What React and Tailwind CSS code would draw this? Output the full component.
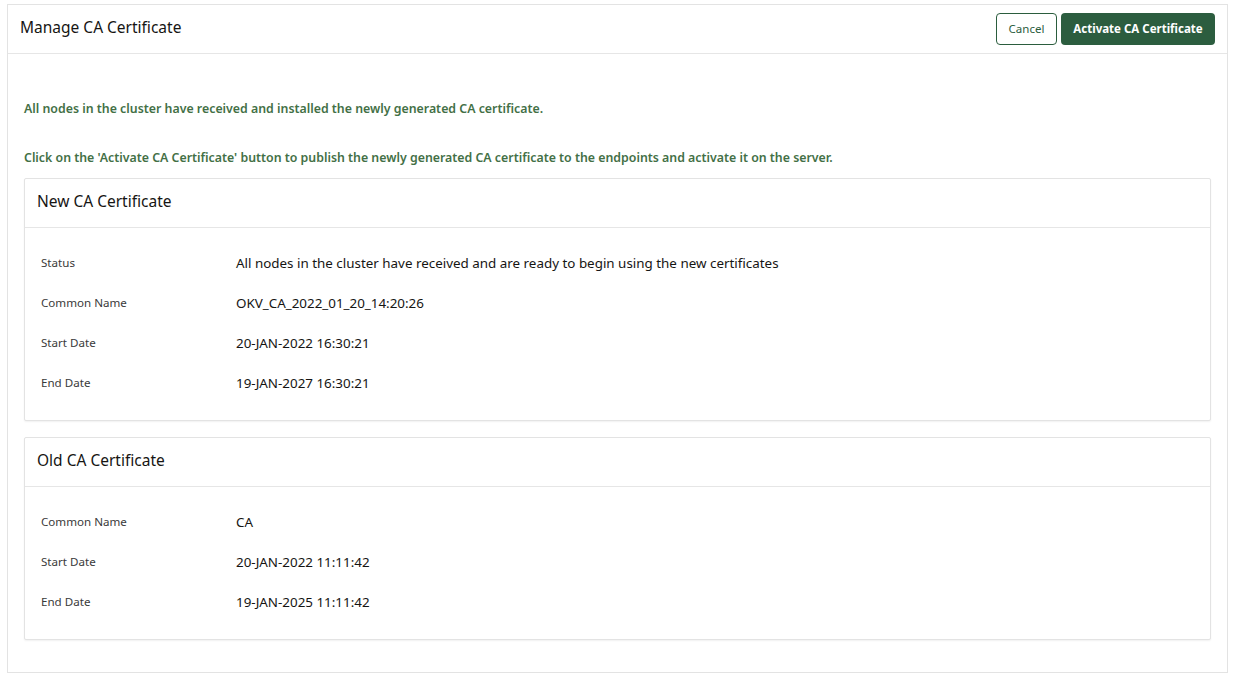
import React from "react";

const font = { fontFamily: '"Noto Sans", "Open Sans", sans-serif' };

function Row({ label, value }) {
  return (
    <div className="flex items-center h-[40px]">
      <div className="w-[195px] text-[11.6px] text-[#3a3a3a]">{label}</div>
      <div className="text-[13.4px] text-[#161513]">{value}</div>
    </div>
  );
}

function Card({ title, rows }) {
  return (
    <div className="border border-[#e3e3e3] rounded-[2px] shadow-[0_1px_2px_rgba(0,0,0,0.06)] bg-white">
      <div className="h-[49px] flex items-center px-[12px] border-b border-[#e6e6e6]">
        <span className="text-[15.5px] text-[#161513] leading-[20px] -mt-[5px]">{title}</span>
      </div>
      <div className="pt-[15px] pb-[17px] px-[16px]">
        {rows.map((r) => (
          <Row key={r[0]} label={r[0]} value={r[1]} />
        ))}
      </div>
    </div>
  );
}

export default function App() {
  return (
    <div className="w-[1236px] h-[679px] bg-white pt-[4px] pl-[7px] pr-[8px]" style={font}>
      <div className="border border-[#e3e3e3] h-[669px] bg-white">
        <div className="h-[49px] flex items-center justify-between pl-[12px] pr-[12px] border-b border-[#e6e6e6]">
          <span className="text-[15.5px] text-[#161513] leading-[20px] -mt-[4px]">Manage CA Certificate</span>
          <div className="flex gap-[4px]">
            <button className="h-[32px] w-[61px] border border-[#2b5d3e] rounded-[4px] text-[11.5px] text-[#2b5d3e] bg-white">
              Cancel
            </button>
            <button className="h-[32px] w-[154px] rounded-[4px] text-[11.5px] font-bold text-white bg-[#2c5d3f]">
              Activate CA Certificate
            </button>
          </div>
        </div>
        <div className="px-[16px]">
          <div className="pt-[46px] text-[12.35px] font-semibold text-[#437046] leading-[18px]">
            All nodes in the cluster have received and installed the newly generated CA certificate.
          </div>
          <div className="pt-[31px] text-[12.35px] font-semibold text-[#437046] leading-[18px]">
            Click on the 'Activate CA Certificate' button to publish the newly generated CA certificate to the endpoints and activate it on the server.
          </div>
          <div className="mt-[11px] flex flex-col gap-[16px]">
            <Card
              title="New CA Certificate"
              rows={[
                ["Status", "All nodes in the cluster have received and are ready to begin using the new certificates"],
                ["Common Name", "OKV_CA_2022_01_20_14:20:26"],
                ["Start Date", "20-JAN-2022 16:30:21"],
                ["End Date", "19-JAN-2027 16:30:21"],
              ]}
            />
            <Card
              title="Old CA Certificate"
              rows={[
                ["Common Name", "CA"],
                ["Start Date", "20-JAN-2022 11:11:42"],
                ["End Date", "19-JAN-2025 11:11:42"],
              ]}
            />
          </div>
        </div>
      </div>
    </div>
  );
}
